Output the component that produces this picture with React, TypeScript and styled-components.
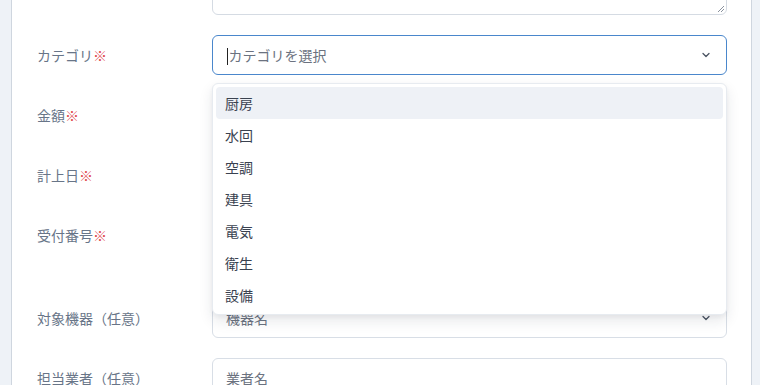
import React from "react";
import styled, { createGlobalStyle } from "styled-components";

const GlobalStyle = createGlobalStyle`
  html, body {
    margin: 0;
    padding: 0;
    background: #eef2f7;
    overflow: hidden;
  }
  body {
    font-family: "Noto Sans CJK JP", "Noto Sans", sans-serif;
  }
`;

const Page = styled.div`
  height: 385px;
  padding-left: 11px;
  overflow: hidden;
`;

const Panel = styled.div`
  width: 739px;
  height: 100%;
  background: #ffffff;
  border-left: 1px solid #cfd6df;
  border-right: 1px solid #cfd6df;
  overflow: hidden;
`;

const Form = styled.div`
  display: flex;
  flex-direction: column;
  gap: 20px;
  padding: 0 24px 0 25px;
  /* scrolled down: the top of the note field is out of view */
  margin-top: -65px;
`;

const Row = styled.div`
  display: grid;
  grid-template-columns: 175px 1fr;
  align-items: start;
`;

const Label = styled.div<{ $top?: boolean }>`
  height: ${(p) => (p.$top ? "auto" : "40px")};
  padding-top: ${(p) => (p.$top ? "10px" : "0")};
  display: flex;
  align-items: center;
  font-size: 14px;
  color: #687588;
`;

const Required = styled.span`
  color: #e0484c;
`;

const Field = styled.div`
  position: relative;
  display: flex;
  flex-direction: column;
`;

const TextArea = styled.div`
  height: 78px;
  border: 1px solid #d5dbe3;
  border-radius: 6px;
  position: relative;
`;

const Grip = styled.svg`
  position: absolute;
  right: 1px;
  bottom: 1px;
`;

const Input = styled.div<{ $focused?: boolean }>`
  box-sizing: border-box;
  height: 40px;
  border: ${(p) => (p.$focused ? "1.5px solid #4a87cc" : "1px solid #d8dee6")};
  border-radius: 6px;
  display: flex;
  align-items: center;
  padding: 0 14px 0 ${(p) => (p.$focused ? "13.5px" : "13px")};
  font-size: 14px;
  color: #6b7280;
  background: #fff;
`;

const Placeholder = styled.span`
  flex: 1;
`;

const Caret = styled.span`
  display: inline-block;
  width: 1px;
  height: 17px;
  background: #222;
  vertical-align: middle;
  margin-right: 1px;
`;

const Hint = styled.div`
  font-size: 12px;
  color: #8a94a3;
  height: 23px;
  line-height: 23px;
`;

const Menu = styled.ul`
  position: absolute;
  z-index: 5;
  left: 0;
  right: 0;
  top: 48px;
  margin: 0;
  padding: 3px;
  list-style: none;
  background: #ffffff;
  border: 1px solid #e7ebf0;
  border-radius: 6px;
  box-shadow: 0 6px 14px rgba(30, 41, 59, 0.1), 0 2px 4px rgba(30, 41, 59, 0.05);
`;

const Option = styled.li<{ $active?: boolean }>`
  height: 32px;
  display: flex;
  align-items: center;
  padding-left: 9px;
  border-radius: 4px;
  font-size: 14px;
  color: #3a4250;
  background: ${(p) => (p.$active ? "#eef1f6" : "transparent")};
`;

const Chevron = () => (
  <svg width="12" height="12" viewBox="0 0 24 24" fill="none" stroke="#4b5563" strokeWidth="2.6" strokeLinecap="round" strokeLinejoin="round">
    <path d="m6 9 6 6 6-6" />
  </svg>
);

const categories = ["厨房", "水回", "空調", "建具", "電気", "衛生", "設備"];

export default function App() {
  return (
    <>
      <GlobalStyle />
      <Page>
        <Panel>
          <Form>
            <Row>
              <Label $top>備考</Label>
              <TextArea>
                <Grip width="9" height="9" viewBox="0 0 9 9">
                  <path d="M8 2 2 8M8 5 5 8" stroke="#8a929e" strokeWidth="1" />
                </Grip>
              </TextArea>
            </Row>
            <Row>
              <Label>
                カテゴリ<Required>※</Required>
              </Label>
              <Field>
                <Input $focused>
                  <Placeholder>
                    <Caret />
                    カテゴリを選択
                  </Placeholder>
                  <Chevron />
                </Input>
                <Menu>
                  {categories.map((c, i) => (
                    <Option key={c} $active={i === 0}>
                      {c}
                    </Option>
                  ))}
                </Menu>
              </Field>
            </Row>
            <Row>
              <Label>
                金額<Required>※</Required>
              </Label>
              <Field>
                <Input>0</Input>
              </Field>
            </Row>
            <Row>
              <Label>
                計上日<Required>※</Required>
              </Label>
              <Field>
                <Input>年/月/日</Input>
              </Field>
            </Row>
            <Row>
              <Label>
                受付番号<Required>※</Required>
              </Label>
              <Field>
                <Input>受付番号</Input>
                <Hint>半角英数字で入力してください</Hint>
              </Field>
            </Row>
            <Row>
              <Label>対象機器（任意）</Label>
              <Field>
                <Input>
                  <Placeholder>機器名</Placeholder>
                  <Chevron />
                </Input>
              </Field>
            </Row>
            <Row>
              <Label>担当業者（任意）</Label>
              <Field>
                <Input>業者名</Input>
              </Field>
            </Row>
          </Form>
        </Panel>
      </Page>
    </>
  );
}
